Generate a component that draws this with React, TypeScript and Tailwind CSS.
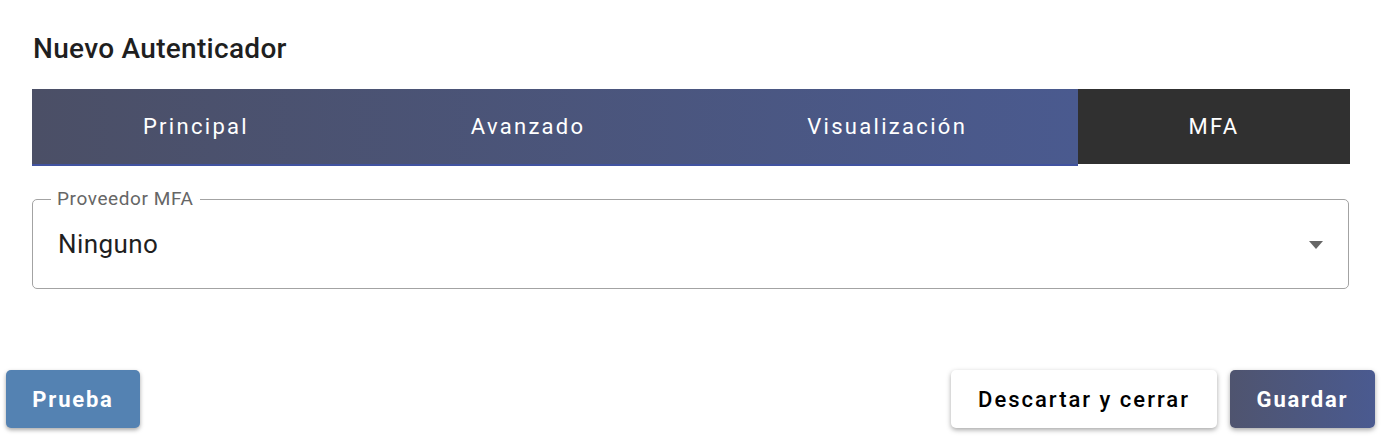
import { useState } from 'react'

const tabs = ['Principal', 'Avanzado', 'Visualización']

export default function App() {
  const [active, setActive] = useState('MFA')

  return (
    <div className="w-[1386px] h-[438px] bg-white flex flex-col" style={{ fontFamily: 'Roboto, "Liberation Sans", sans-serif' }}>
      {/* Title */}
      <div className="pl-[33px] pt-[31px] text-[28px] leading-[36px] font-medium tracking-[0.3px] text-[#1f1f1f]">Nuevo Autenticador</div>

      {/* Tabs */}
      <div className="ml-[32px] mr-[36px] mt-[22px] flex h-[77px]">
        <div className="flex flex-1 bg-gradient-to-r from-[#4b4f66] to-[#4a5a8f] border-b-2 border-[#4153a0]">
          {tabs.map((t) => (
            <button
              key={t}
              onClick={() => setActive(t)}
              className="flex-auto flex items-center justify-center text-[22px] tracking-[2.3px] text-white"
            >
              {t}
            </button>
          ))}
        </div>
        <button
          onClick={() => setActive('MFA')}
          className={`w-[272px] h-[75px] flex items-center justify-center text-[22px] tracking-[2.3px] text-white ${
            active === 'MFA' ? 'bg-[#303030]' : 'bg-[#4a5a8f]'
          }`}
        >
          MFA
        </button>
      </div>

      {/* Select */}
      <div className="ml-[32px] mr-[37px] mt-[33px] relative h-[90px] border border-[#a3a3a3] rounded-[5px] flex items-center px-[25px]">
        <span className="absolute left-[18px] top-[-13px] bg-white px-[6px] text-[19px] leading-[24px] tracking-[0.6px] text-[#666]">
          Proveedor MFA
        </span>
        <span className="flex-1 text-[26px] tracking-[0.4px] text-[#1f1f1f] pt-[1px]">Ninguno</span>
        <svg width="16" height="8" viewBox="0 0 16 8" className="mr-[-1px] mt-[2px]">
          <path d="M1 0 L15 0 L8 8 Z" fill="#666" />
        </svg>
      </div>

      {/* Actions */}
      <div className="mt-auto mb-[10px] flex items-center pl-[6px] pr-[11px]">
        <button className="h-[58px] w-[134px] rounded-[5px] bg-[#5482b2] text-white text-[22px] font-bold tracking-[1.8px] shadow-[0_2px_4px_rgba(0,0,0,0.35)]">
          Prueba
        </button>
        <div className="flex-1" />
        <button className="h-[58px] w-[266px] rounded-[5px] bg-white text-black text-[22px] font-medium tracking-[2px] shadow-[0_2px_5px_rgba(0,0,0,0.35)]">
          Descartar y cerrar
        </button>
        <button className="ml-[13px] h-[58px] w-[145px] rounded-[5px] bg-gradient-to-r from-[#4f546f] to-[#4a5a90] text-white text-[22px] font-bold tracking-[1.8px] shadow-[0_2px_5px_rgba(0,0,0,0.35)]">
          Guardar
        </button>
      </div>
    </div>
  )
}
